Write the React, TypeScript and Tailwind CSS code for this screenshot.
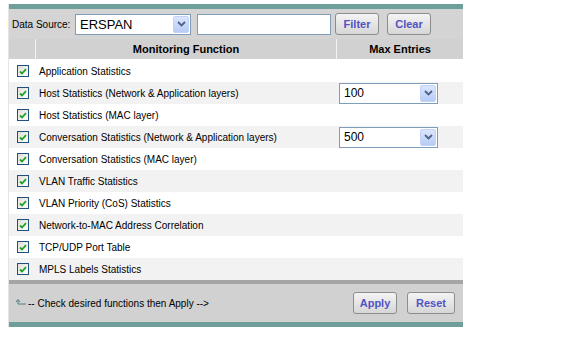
import React from "react";

const rows: { label: string; sel?: string }[] = [
  { label: "Application Statistics" },
  { label: "Host Statistics (Network & Application layers)", sel: "100" },
  { label: "Host Statistics (MAC layer)" },
  { label: "Conversation Statistics (Network & Application layers)", sel: "500" },
  { label: "Conversation Statistics (MAC layer)" },
  { label: "VLAN Traffic Statistics" },
  { label: "VLAN Priority (CoS) Statistics" },
  { label: "Network-to-MAC Address Correlation" },
  { label: "TCP/UDP Port Table" },
  { label: "MPLS Labels Statistics" },
];

function Chevron() {
  return (
    <svg width="9" height="6" viewBox="0 0 9 6">
      <path d="M1 1 L4.5 4.5 L8 1" fill="none" stroke="#4d6185" strokeWidth="1.8" />
    </svg>
  );
}

function Select({ value, w, big }: { value: string; w: string; big?: boolean }) {
  return (
    <div className={`${w} h-[21px] bg-white border border-[#7f9db9] flex items-center`}>
      <span className={`flex-1 pl-[4px] ${big ? "text-[13px]" : "text-[12px]"} text-black leading-none`}>{value}</span>
      <div className="w-[16px] h-[17px] mr-[1px] rounded-[2px] bg-gradient-to-b from-[#dbe6fd] to-[#b7cbf6] border border-[#c3d3f8] flex items-center justify-center">
        <Chevron />
      </div>
    </div>
  );
}

function Check() {
  return (
    <div className="w-[12px] h-[12px] border border-[#1c5180] bg-gradient-to-br from-[#e0e0d8] to-white flex items-center justify-center">
      <svg width="8" height="7" viewBox="0 0 8 7">
        <path d="M1 3.5 L3 5.5 L7 1.2" fill="none" stroke="#21a121" strokeWidth="1.8" />
      </svg>
    </div>
  );
}

function Btn({ label, w }: { label: string; w: string }) {
  return (
    <div className={`${w} h-[22px] rounded-[3px] border border-[#8d8d8d] bg-gradient-to-b from-[#f4f4f4] to-[#d6d6d6] flex items-center justify-center text-[11px] font-bold text-[#5252c4]`}>
      {label}
    </div>
  );
}

export default function App() {
  return (
    <div
      className="w-[576px] h-[363px] bg-white pt-[4px] pl-[8px]"
      style={{ fontFamily: '"Liberation Sans", Arial, sans-serif' }}
    >
      <div className="w-[455px] border-l border-[#e4e4e4]">
        <div className="h-[5px] bg-[#6f9f9b]" />
        <div className="h-[30px] bg-[#d4d4d4] flex items-center pl-[3px]">
          <span className="text-[10px] text-black w-[63px]">Data Source:</span>
          <Select value="ERSPAN" w="w-[116px]" big />
          <div className="ml-[6px] w-[134px] h-[21px] bg-white border border-[#7f9db9]" />
          <div className="ml-[4px]">
            <Btn label="Filter" w="w-[44px]" />
          </div>
          <div className="ml-[8px]">
            <Btn label="Clear" w="w-[44px]" />
          </div>
        </div>
        <div className="h-[20px] bg-[#d1d1d1] grid grid-cols-[27px_301px_1fr] text-[11px] font-bold text-black">
          <div className="border-r border-[#f4f4f4]" />
          <div className="border-r border-[#f4f4f4] flex items-center justify-center">Monitoring Function</div>
          <div className="flex items-center justify-center">Max Entries</div>
        </div>
        <div className="pt-[1px]">
          {rows.map((r, i) => (
            <div
              key={r.label}
              className={`h-[22px] grid grid-cols-[27px_301px_1fr] items-center ${i % 2 === 1 ? "bg-[#f2f2f2]" : "bg-white"}`}
            >
              <div className="flex justify-center pl-[1px]">
                <Check />
              </div>
              <div className="pl-[3px] text-[10px] text-black">{r.label}</div>
              <div className="pl-[2px]">{r.sel && <Select value={r.sel} w="w-[99px]" />}</div>
            </div>
          ))}
        </div>
        <div className="h-[4px] bg-[#a5a5a5]" />
        <div className="h-[38px] bg-[#d1d1d1] flex items-center pl-[6px] pr-[8px]">
          <svg width="12" height="8" viewBox="0 0 12 8" className="mr-[1px]">
            <path d="M3 1 L3 5 L11 5" fill="none" stroke="#4f7f7c" strokeWidth="1" />
            <path d="M1 3 L3 0.5 L5 3" fill="none" stroke="#4f7f7c" strokeWidth="1" />
          </svg>
          <span className="text-[10px] text-black">-- Check desired functions then Apply --&gt;</span>
          <div className="flex-1" />
          <Btn label="Apply" w="w-[44px]" />
          <div className="ml-[10px]">
            <Btn label="Reset" w="w-[48px]" />
          </div>
        </div>
        <div className="h-[5px] bg-[#6f9f9b]" />
      </div>
    </div>
  );
}
